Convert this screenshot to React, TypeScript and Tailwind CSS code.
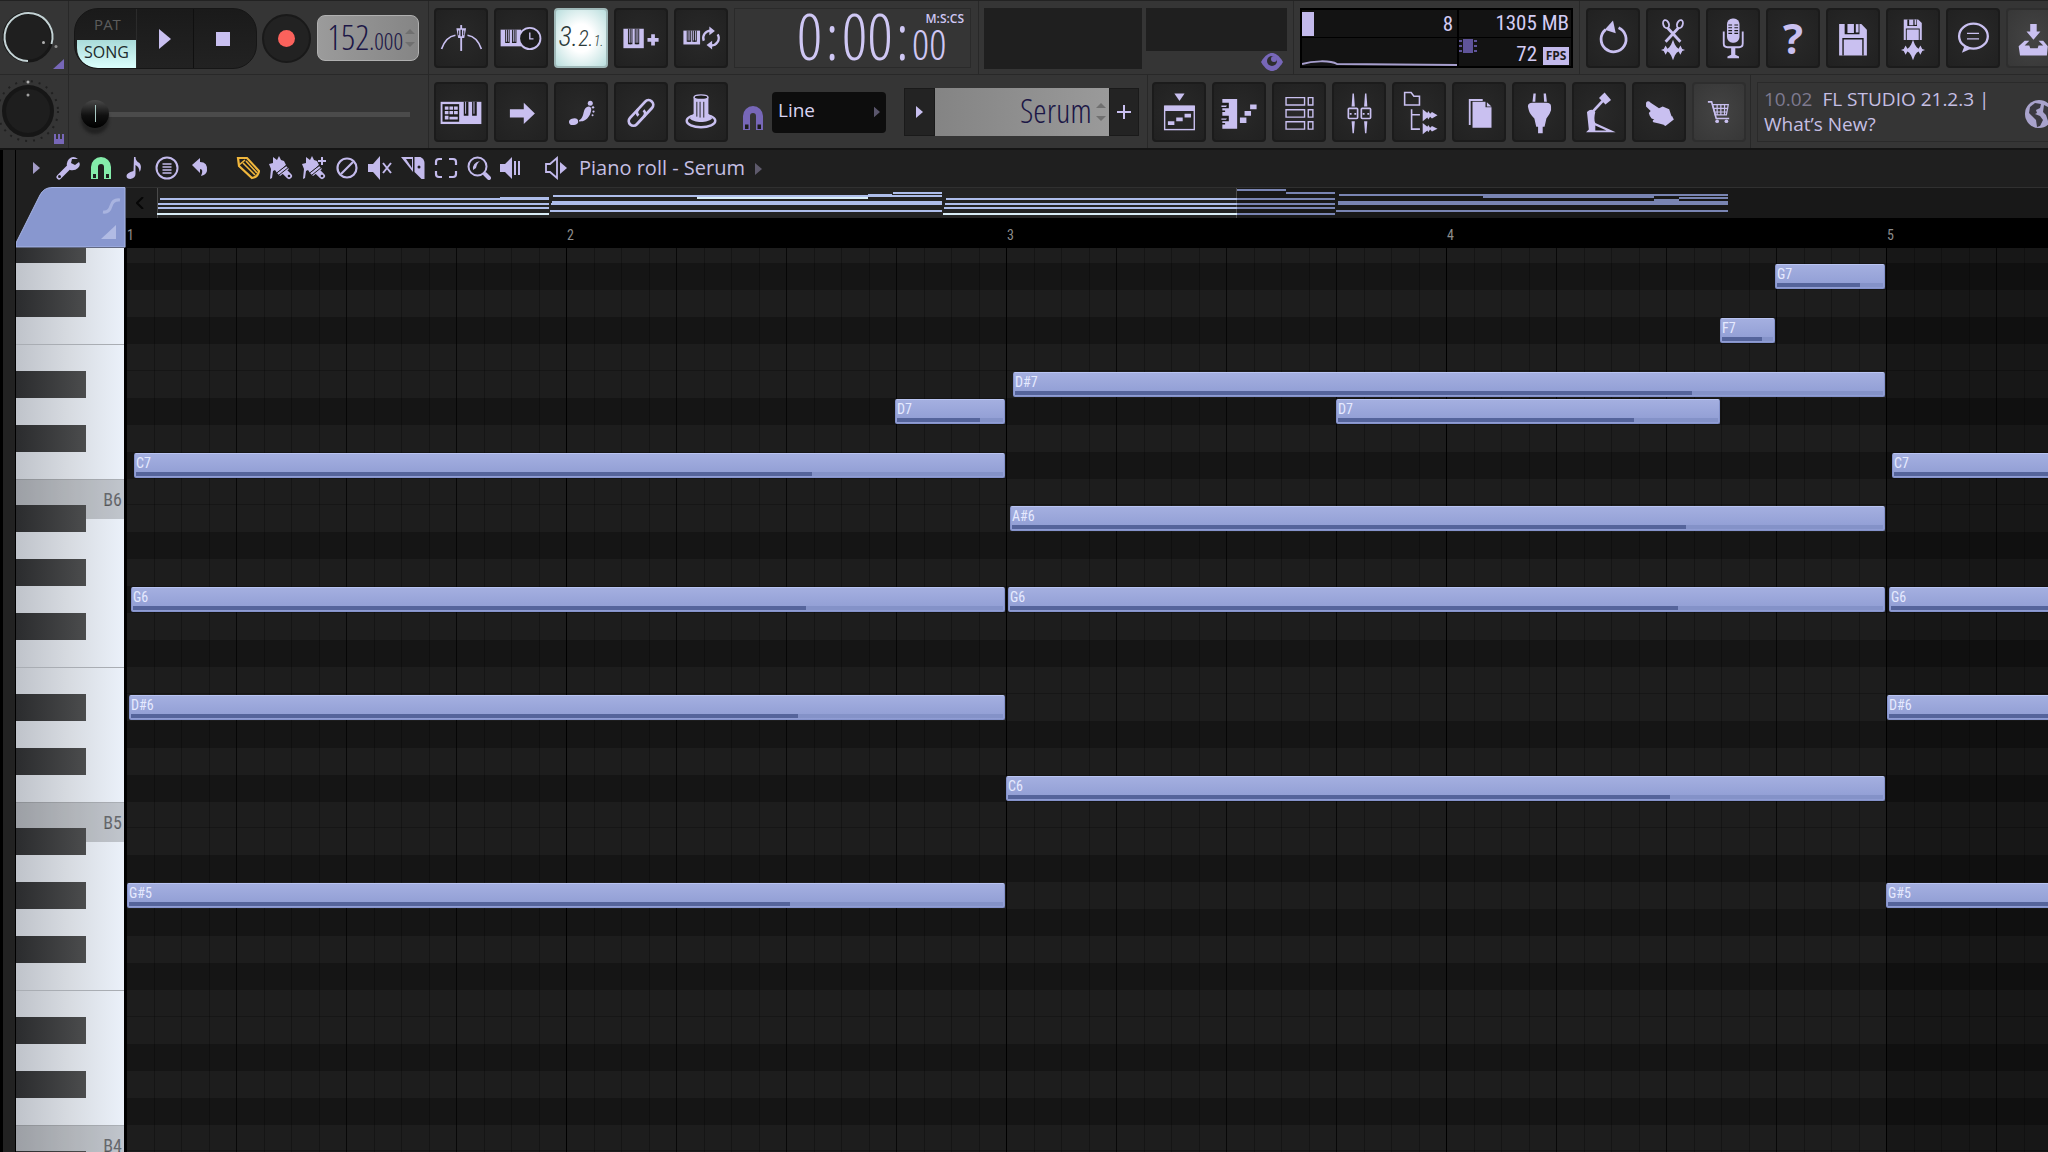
import React from 'react';
import clsx from 'clsx';

const TOP_PITCH = 92; // G#7
const ROW_COUNT = 36;
const BARS = [1, 2, 3, 4, 5];
const STEPS = Array.from({ length: 16 }, (_, i) => i);
const NAMES = ['C', 'C#', 'D', 'D#', 'E', 'F', 'F#', 'G', 'G#', 'A', 'A#', 'B'];
const BLACK = [1, 3, 6, 8, 10];
// rows shaded darker for the selected scale
const SHADED = [0, 2, 5, 7, 9];

const PITCHES = Array.from({ length: ROW_COUNT }, (_, i) => TOP_PITCH - i);

const noteName = (pitch: number) => `${NAMES[pitch % 12]}${Math.floor(pitch / 12)}`;

// B rows are one pixel shorter, so an octave is 323px
const rowTop = (pitch: number) =>
  PITCHES.filter((p) => p > pitch).reduce((y, p) => y + (p % 12 === 11 ? 26 : 27), 0);

interface Note {
  pitch: number;
  start: number;
  end: number;
  level: number;
}

const NOTES: Note[] = [
  { pitch: 91, start: 1649, end: 1759, level: 78 },
  { pitch: 89, start: 1594, end: 1649, level: 78 },
  { pitch: 87, start: 887, end: 1759, level: 78 },
  { pitch: 86, start: 769, end: 879, level: 78 },
  { pitch: 86, start: 1210, end: 1594, level: 78 },
  { pitch: 84, start: 8, end: 879, level: 78 },
  { pitch: 84, start: 1766, end: 2640, level: 78 },
  { pitch: 82, start: 884, end: 1759, level: 77.4 },
  { pitch: 79, start: 5, end: 879, level: 77.4 },
  { pitch: 79, start: 882, end: 1759, level: 76.5 },
  { pitch: 79, start: 1763, end: 2640, level: 77 },
  { pitch: 75, start: 3, end: 879, level: 76.5 },
  { pitch: 75, start: 1761, end: 2640, level: 76.5 },
  { pitch: 72, start: 880, end: 1759, level: 75.7 },
  { pitch: 68, start: 1, end: 879, level: 75.6 },
  { pitch: 68, start: 1760, end: 2640, level: 75.6 },
];

// x, y, width, height of each line in the overview strip
const OVERVIEW: number[][] = [
  [3, 10, 389, 2], [1, 15, 391, 2], [1, 19, 391, 2], [0, 25, 392, 2], [343, 9, 49, 3],
  [396, 7, 389, 2], [540, 9, 171, 2], [711, 6, 24, 3], [736, 4, 49, 2], [395, 13, 390, 2], [394, 15, 391, 2], [393, 22, 392, 2],
  [789, 10, 291, 2], [788, 15, 292, 2], [787, 19, 293, 2], [786, 25, 294, 2],
  [1080, 1, 49, 2], [1129, 4, 49, 2], [1080, 10, 98, 2], [1080, 15, 98, 2], [1080, 19, 98, 2], [1080, 25, 98, 2],
  [1182, 6, 389, 2], [1326, 8, 171, 2], [1497, 11, 25, 2], [1522, 9, 49, 2], [1181, 13, 390, 4], [1179, 22, 392, 2],
];

const DARK = '#1c1c1c';

function Svg({ children, className = 'h-[60px] w-[54px]', box = '0 0 54 60' }: { children: React.ReactNode; className?: string; box?: string }) {
  return (
    <svg viewBox={box} className={className} fill="currentColor" aria-hidden="true">
      {children}
    </svg>
  );
}

function ToolButton({ label, children, lit, light }: { label: string; children: React.ReactNode; lit?: boolean; light?: boolean }) {
  return (
    <button
      type="button"
      aria-label={label}
      className={clsx(
        'flex h-[60px] w-[54px] shrink-0 items-center justify-center rounded-sm border-2 text-[#c9c0f0]',
        lit && 'border-[#9fb8b8] bg-[radial-gradient(#ffffff_35%,#b9dedd)]',
        light && 'border-[#2e2e2e] bg-[radial-gradient(#444444,#373737)]',
        !lit && !light && 'border-[#1b1b1b] bg-[radial-gradient(#292929,#212121)]'
      )}
    >
      {children}
    </button>
  );
}

function Keys({ x, y, w, h }: { x: number; y: number; w: number; h: number }) {
  const k = w / 3;
  return (
    <g>
      <rect x={x} y={y} width={w} height={h} />
      {[1, 2].map((i) => (
        <path key={i} fill={DARK} d={`M${x + k * i - 2.4} ${y}h1v${h * 0.72}h2.8v-${h * 0.72}h1v${h * 0.8}h-4.8z`} />
      ))}
      {[1, 2].map((i) => (
        <rect key={i} x={x + k * i - 0.5} y={y} width="1" height={h * 0.8} fill={DARK} />
      ))}
    </g>
  );
}

function Wave({ y }: { y: number }) {
  return <path d={`M14 ${y}l3-1 2-4 2 3.500 2-1.500 2-3 2-5 2 5 2 3 2 1.500 2-3.500 2 4 3 1-3 1-2 4-2-3.500-2 1.500-2 3-2 5-2-5-2-3-2-1.500-2 3.500-2-4z`} />;
}

function Floppy({ x, y, s }: { x: number; y: number; s: number }) {
  return (
    <g transform={`translate(${x} ${y}) scale(${s})`}>
      <path d="M0 0h24l6 6v28H0z" />
      <path fill={DARK} d="M6 0h3v11H6zM9 9.500h7V11H9zM16 0h6v11h-6z" />
      <path d="M18 0h3v9h-3z" />
      <path fill={DARK} d="M3.500 15h23v19h-1.500V16.500H5V34H3.500z" />
    </g>
  );
}

function Magnet({ className }: { className: string }) {
  return (
    <Svg box="0 0 22 26" className={className}>
      <path d="M1 25V11a10 10 0 0 1 20 0v14h-7V11a3 3 0 0 0-6 0v14z" />
      <path fill={DARK} d="M3 19.500h3.500V24H3zM15.500 19.500H19V24h-3.500z" />
    </Svg>
  );
}

function Steppers() {
  return (
    <span className="flex flex-col gap-2 text-[#707070]">
      <Svg box="0 0 10 5" className="h-[5px] w-[10px]"><path d="M0 5L5 0l5 5z" /></Svg>
      <Svg box="0 0 10 5" className="h-[5px] w-[10px]"><path d="M0 0l5 5 5-5z" /></Svg>
    </span>
  );
}

function Arrow({ className }: { className: string }) {
  return <Svg box="0 0 7 12" className={className}><path d="M0 0l7 6-7 6z" /></Svg>;
}

function Transport() {
  return (
    <div className="flex h-[61px] w-[183px] overflow-hidden rounded-[24px] border border-[#161616] bg-linear-to-b from-[#1a1a1a] to-[#222222]">
      <div className="flex w-[62px] flex-col border-r border-[#2b2b2b] font-['Open_Sans']">
        <button type="button" className="h-8 w-full pl-1 text-[15px] text-[#5c5c5c]">PAT</button>
        <button type="button" className="ml-0.5 h-7 rounded-bl-[20px] bg-linear-to-b from-[#a9dbd9] to-[#dcfffd] pb-1 text-base leading-6 text-[#1c2b2b]">SONG</button>
      </div>
      <button type="button" aria-label="Play" className="flex w-[57px] items-center justify-center border-r border-[#101010] text-[#c9c0f0]">
        <Svg box="0 0 12 20" className="h-5 w-3"><path d="M0 0l12 10L0 20z" /></Svg>
      </button>
      <button type="button" aria-label="Stop" className="flex flex-1 items-center pl-[22px]">
        <span className="size-3.5 bg-[#c9c0f0]" />
      </button>
    </div>
  );
}

function Knob({ label, ring, children }: { label: string; ring?: boolean; children: React.ReactNode }) {
  return (
    <div className="w-[69px] shrink-0 overflow-hidden border-r border-[#282828] text-[#7767b8]">
      <svg viewBox="0 0 68 73" className="h-[73px] w-[68px]" role="img" aria-label={label}>
        {ring ? (
          <>
            <circle cx="28" cy="36" r="24" fill="#1f1f1f" stroke="#171717" strokeWidth="3" />
            <path d="M28 60A24 24 0 1 1 51.500 43" fill="none" stroke="#c3d2d4" strokeWidth="2" />
            <circle cx="43.500" cy="41.500" r="1.500" fill="#b0b0b0" />
            <circle cx="56" cy="45.500" r="1.500" fill="#909090" />
          </>
        ) : (
          <>
            <circle cx="28" cy="36" r="30" fill="none" stroke="#202020" strokeWidth="2" strokeDasharray="2 6" />
            <circle cx="28" cy="36" r="24" fill="#1e1e1e" stroke="#161616" strokeWidth="4" />
            <circle cx="28" cy="7" r="1.500" fill="#b0b0b0" />
            <circle cx="28" cy="20" r="1.500" fill="#a0a0a0" />
          </>
        )}
        {children}
      </svg>
    </div>
  );
}

function Monitor() {
  return (
    <div className="flex h-[60px] w-[273px] border-2 border-black bg-black font-['Roboto_Condensed'] text-[21px] leading-6 text-[#d3ccf4]">
      <div className="flex w-[155px] flex-col bg-[#131313]">
        <div className="flex h-[28px] items-center justify-between border-b border-black pr-1">
          <span className="h-6 w-3 bg-[#c3baec]" />
          <span>8</span>
        </div>
        <svg viewBox="0 0 155 28" className="h-7 w-[155px]" fill="none" stroke="#a79fce" strokeWidth="2" aria-hidden="true">
          <path d="M0 26C10 23 28 22 35 26L155 27" />
        </svg>
      </div>
      <div className="ml-0.5 flex-1 bg-[#131313]">
        <div className="flex h-[28px] items-center justify-end border-b border-black pr-0.5 pb-0.5">1305 MB</div>
        <div className="flex h-7 items-center justify-end gap-1.5 pt-1 pr-0.5">
          <Svg box="0 0 18 14" className="mr-auto mb-4 h-3.5 w-[18px] text-[#5f5499]">
            <path d="M4 0h10v14H4zM0 1h3v2H0zM0 6h3v2H0zM0 11h3v2H0zM15 1h3v2h-3zM15 6h3v2h-3zM15 11h3v2h-3z" />
          </Svg>
          <span>72</span>
          <span className="mt-1 h-[18px] w-[26px] bg-[#c3baec] text-center font-['Open_Sans'] text-xs leading-[18px] font-bold text-[#1c1c1c]">FPS</span>
        </div>
      </div>
    </div>
  );
}

function TopRow() {
  return (
    <div className="flex h-[74px] border-b border-[#282828]">
      <Knob label="Main volume" ring>
        <path fill="currentColor" d="M64 58v10H53z" />
      </Knob>
      <div className="flex w-[360px] shrink-0 items-start border-r border-[#282828] pt-[7px] pl-[5px]">
        <Transport />
        <button type="button" aria-label="Record" className="mt-1.5 ml-[5px] flex size-[49px] items-center justify-center rounded-full border-2 border-[#191919] bg-[#222222]">
          <span className="size-[17px] rounded-full bg-[#fb625c]" />
        </button>
        <div className="mt-[7px] ml-1.5 flex h-[46px] w-[102px] items-center justify-end gap-0.5 rounded-lg border border-[#b0b0b0] bg-linear-to-r from-[#9b9b9b] to-[#858585] pr-[3px] font-['Open_Sans_Condensed_Light'] text-[#1c1746]">
          <span className="pb-0.5 text-[35px] leading-[38px]">152<span className="text-2xl">.000</span></span>
          <Steppers />
        </div>
      </div>
      <div className="flex w-[550px] shrink-0 items-start gap-1.5 border-r border-[#282828] pt-[7px] pl-[5px]">
        <ToolButton label="Metronome">
          <Svg>
            <path d="M22 19.500h10.500l-2 10.500h-6.500z" />
            <path d="M27.200 16v28" stroke="currentColor" strokeWidth="2" />
            <path fill={DARK} d="M26.500 21h1.500v7h-1.500zM24 22h1v5h-1zM29.500 22h1v5h-1z" />
            <path d="M6 42c3-9 8-14 15-15M49 42c-3-9-8-14-15-15" fill="none" stroke="currentColor" strokeWidth="1.800" />
          </Svg>
        </ToolButton>
        <ToolButton label="Wait for input">
          <Svg>
            <Keys x={5} y={21} w={22} h={18} />
            <circle cx="36.500" cy="30.500" r="11.500" fill={DARK} stroke="currentColor" strokeWidth="2" />
            <path d="M36.500 24v7h4" fill="none" stroke="currentColor" strokeWidth="1.500" />
          </Svg>
        </ToolButton>
        <ToolButton label="Countdown" lit>
          <span className="font-['Roboto_Condensed'] text-[28px] leading-8 font-light text-[#2c3a3a] italic">
            3.<span className="text-[22px]">2.</span><span className="text-sm">1.</span>
          </span>
        </ToolButton>
        <ToolButton label="Step edit">
          <Svg>
            <Keys x={8} y={20} w={22} h={21} />
            <path d="M38 26h4v4h4v4h-4v4h-4v-4h-4v-4h4z" />
          </Svg>
        </ToolButton>
        <ToolButton label="Loop record">
          <Svg>
            <Keys x={8} y={22} w={18} h={15} />
            <path d="M30 33a8 8 0 0 1 8-11M45 26a8 8 0 0 1-8 12" fill="none" stroke="currentColor" strokeWidth="2.500" />
            <path d="M36 17.500l6 5-6 4.500zM39 42.500l-6-5 6-4.500z" />
          </Svg>
        </ToolButton>
        <div className="flex h-[60px] w-[237px] justify-end border border-[#2a2a2a] font-['Open_Sans_Condensed_Light'] text-[#cfc7f4]">
          <div className="flex items-baseline text-[64px] leading-[54px]">
            <span>0</span>
            <span className="px-[3px]">:</span>
            <span>00</span>
            <span className="px-[3px]">:</span>
          </div>
          <div className="flex w-[58px] flex-col items-end pt-1 pr-1.5">
            <span className="font-['Open_Sans'] text-xs leading-3 font-semibold">M:S:CS</span>
            <span className="mr-auto text-[43px] leading-[38px]">00</span>
          </div>
        </div>
      </div>
      <div className="flex w-[315px] shrink-0 items-start gap-1 border-r border-[#282828] pt-[7px] pl-[5px]">
        <div className="h-[61px] w-[158px] bg-[#1f1f1f]" />
        <div className="flex w-[141px] flex-col items-end">
          <div className="h-[43px] w-full bg-[#1f1f1f]" />
          <Svg box="0 0 22 18" className="mt-0.5 mr-1 h-[18px] w-[22px] text-[#7767b8]">
            <path d="M0 9C4 2 8 0 11 0s7 2 11 9c-4 7-8 9-11 9S4 16 0 9z" />
            <circle cx="11" cy="8" r="5" fill="#2e2e2e" />
            <circle cx="13" cy="6" r="3" />
          </Svg>
        </div>
      </div>
      <div className="w-[286px] shrink-0 border-r border-[#282828] pt-[7px] pl-1.5">
        <Monitor />
      </div>
      <div className="flex min-w-0 flex-1 gap-1.5 overflow-hidden pt-[7px] pl-1.5">
        <ToolButton label="Undo">
          <Svg>
            <path d="M19 21a13.500 13.500 0 1 0 14-2" fill="none" stroke="currentColor" strokeWidth="3" />
            <path d="M27 11l3 14-12-4z" />
          </Svg>
        </ToolButton>
        <ToolButton label="Cut tool">
          <Svg>
            <g fill="none" stroke="currentColor">
              <path d="M21 19l14 15M33 19L19 34" strokeWidth="3" />
              <ellipse cx="19.500" cy="15" rx="3" ry="4.500" strokeWidth="2" transform="rotate(-20 19.500 15)" />
              <ellipse cx="34.500" cy="15" rx="3" ry="4.500" strokeWidth="2" transform="rotate(20 34.500 15)" />
            </g>
            <Wave y={43} />
          </Svg>
        </ToolButton>
        <ToolButton label="Record audio">
          <Svg>
            <rect x="20.500" y="9" width="13.500" height="26" rx="6" />
            <path stroke={DARK} strokeWidth="1.200" d="M22 16h4M28.500 16h4M22 19h4M28.500 19h4M22 22h4M28.500 22h4M22 25h4M28.500 25h4" />
            <path d="M17 23v13q0 4 4 4h12.500q4 0 4-4V23" fill="none" stroke="currentColor" strokeWidth="2" />
            <path d="M25 40h4.500v8l4 2v2H21v-2l4-2z" />
          </Svg>
        </ToolButton>
        <ToolButton label="Help">
          <span className="font-['Open_Sans'] text-[42px] leading-[56px] font-bold">?</span>
        </ToolButton>
        <ToolButton label="Save">
          <Svg><Floppy x={12} y={15} s={1} /></Svg>
        </ToolButton>
        <ToolButton label="Render audio">
          <Svg>
            <Floppy x={17} y={10} s={0.65} />
            <Wave y={43} />
          </Svg>
        </ToolButton>
        <ToolButton label="Feedback">
          <Svg>
            <ellipse cx="27.500" cy="28" rx="15.500" ry="13.500" fill="none" stroke="currentColor" strokeWidth="2.500" />
            <path d="M18 38l-3 8 11-5z" />
            <path d="M20.500 25h13M20.500 31h13" stroke="currentColor" strokeWidth="1.500" />
          </Svg>
        </ToolButton>
        <ToolButton label="Download" light>
          <Svg>
            <path d="M24 15h7v8h4l-7.500 9L20 23h4z" />
            <path d="M18 33h5l-5 5h5l1 3h8l1-3h5l-5-5h5l5 6-1 10H13l-1.500-10z" />
          </Svg>
        </ToolButton>
      </div>
    </div>
  );
}

function SecondRow() {
  return (
    <div className="flex h-[73px]">
      <Knob label="Main pitch">
        <path fill="currentColor" d="M54 59h2v5h2v-5h2v5h2v-5h2v10H54z" />
      </Knob>
      <div className="w-[360px] shrink-0 border-r border-[#282828] pt-[25px] pl-3">
        <input
          type="range"
          aria-label="Song position"
          min={0}
          max={100}
          defaultValue={0}
          className="h-7 w-[329px] appearance-none bg-transparent [&::-webkit-slider-runnable-track]:h-[5px] [&::-webkit-slider-runnable-track]:bg-[#4b4b4b] [&::-webkit-slider-thumb]:-mt-3 [&::-webkit-slider-thumb]:size-7 [&::-webkit-slider-thumb]:appearance-none [&::-webkit-slider-thumb]:rounded-full [&::-webkit-slider-thumb]:shadow-[0_6px_3px_#222] [&::-webkit-slider-thumb]:[background:linear-gradient(#a9c9c4,#a9c9c4)_center/1px_17px_no-repeat,linear-gradient(#4a4a4a,#101010_55%,#000)]"
        />
      </div>
      <div className="flex w-[719px] shrink-0 items-start gap-1.5 border-r border-[#282828] pt-[7px] pl-[5px]">
        <ToolButton label="Typing keyboard">
          <Svg>
            <rect x="5" y="19" width="44" height="24" />
            <rect x="7" y="21.500" width="18" height="19" fill={DARK} />
            <path d="M9.500 24h4v3.500h-4zM14.500 24h4v3.500h-4zM19.500 24h4v3.500h-4zM9.500 29h4v3.500h-4zM14.500 29h4v3.500h-4zM19.500 29h4v3.500h-4zM9.500 34h4v4h-4zM14.500 35h9v3h-9z" />
            <path fill={DARK} d="M30 19h5v15h-5zM39 19h5v15h-5z" />
            <path d="M31.500 19h1v13h-1zM40.500 19h1v13h-1z" />
          </Svg>
        </ToolButton>
        <ToolButton label="Step forward">
          <Svg><path d="M15 27h15v-7l12 11.500L30 43v-7H15z" /></Svg>
        </ToolButton>
        <ToolButton label="Slide notes">
          <Svg>
            <ellipse cx="19" cy="40.500" rx="5" ry="3.500" transform="rotate(-10 19 40.500)" />
            <path d="M25 39c5-3 4-8 6-12 3-5 8-3 7 1-1 7-6 12-11 12q-3 1-2-1z" />
            <circle cx="37" cy="20.500" r="2.700" />
            <circle cx="40" cy="25" r="1.300" />
            <circle cx="40.500" cy="29.500" r="1.200" />
            <circle cx="39.500" cy="33.500" r="1.100" />
          </Svg>
        </ToolButton>
        <ToolButton label="Link controllers">
          <Svg>
            <g fill="none" stroke="currentColor" strokeWidth="3" transform="rotate(-47 27 31)">
              <path d="M28 26H15a5 5 0 0 0 0 10h11a5 5 0 0 0 5-5" />
              <path d="M26 36h13a5 5 0 0 0 0-10H28a5 5 0 0 0-5 5" />
            </g>
          </Svg>
        </ToolButton>
        <ToolButton label="Knob control">
          <Svg>
            <ellipse cx="27" cy="39.500" rx="15.500" ry="7" fill="none" stroke="currentColor" strokeWidth="2.500" />
            <path d="M19 14h16v18l4 5c-4 5-20 5-24 0l4-5z" />
            <ellipse cx="27" cy="14" rx="7.500" ry="2.500" fill={DARK} stroke="currentColor" strokeWidth="1.500" />
            <path stroke={DARK} d="M22.500 19v16M26 19v17M30 19v17" />
          </Svg>
        </ToolButton>
        <Magnet className="mt-[23px] ml-2 h-[26px] w-[22px] shrink-0 text-[#7767b8]" />
        <div className="relative mt-2.5 ml-0.5 w-[114px]">
          <select aria-label="Snap" className="h-[41px] w-full appearance-none rounded-sm bg-[#0d0d0d] pl-1.5 pb-1 font-['Open_Sans'] text-[19px] text-[#d9d4f2]">
            <option>Line</option>
          </select>
          <Arrow className="absolute top-3.5 right-1.5 h-3 w-1.5 text-[#5a566c]" />
        </div>
        <div className="mt-1.5 ml-3 flex h-12 w-[235px]">
          <button type="button" aria-label="Channel menu" className="flex w-[31px] items-center justify-center border border-[#1a1a1a] bg-[#232323] text-[#c9c0f0]">
            <Arrow className="h-3 w-[7px]" />
          </button>
          <div className="flex flex-1 items-center justify-end gap-1 bg-linear-to-r from-[#848484] to-[#9a9a9a] pr-[3px] font-['Open_Sans_Condensed_Light'] text-[#1c1746]">
            <span className="pb-1 text-[34px] leading-10">Serum</span>
            <Steppers />
          </div>
          <button type="button" aria-label="Add pattern" className="flex w-[30px] items-center justify-center border border-[#1a1a1a] bg-[#232323] text-[#c9c0f0]">
            <Svg box="0 0 14 14" className="size-3.5"><path d="M6 0h2v6h6v2H8v6H6V8H0V6h6z" /></Svg>
          </button>
        </div>
      </div>
      <div className="flex w-[603px] shrink-0 gap-1.5 border-r border-[#282828] pt-[7px] pl-1">
        <ToolButton label="Playlist">
          <Svg>
            <path d="M22 10h11l-5.500 8z" />
            <rect x="11.500" y="24" width="32" height="25" fill="none" stroke="currentColor" strokeWidth="1.500" />
            <path d="M11 23h33v6H11zM15 40h7v4h-7zM24 36h7v4h-7zM33 32h7v4h-7z" />
          </Svg>
        </ToolButton>
        <ToolButton label="Piano roll">
          <Svg>
            <path d="M9 16h16v32H9zM28 36h7v6h-7zM33 29h7v5h-7zM39 22h7v5h-7z" />
            <path fill={DARK} d="M8 20h8v6H8zM8 28.500h4v1.500H8zM8 34h8v6H8zM8 42h4v1.500H8z" />
            <path d="M8 23h6l-1 1.500H8zM8 37h6l-1 1.500H8z" />
          </Svg>
        </ToolButton>
        <ToolButton label="Channel rack">
          <Svg>
            <path fill="none" stroke="currentColor" strokeWidth="1.500" d="M13 14.500h20v8H13zM37 14.500h5v8h-5zM13 27.500h20v8H13zM37 27.500h5v8h-5zM13 40.500h20v8H13zM37 40.500h5v8h-5z" />
          </Svg>
        </ToolButton>
        <ToolButton label="Mixer">
          <Svg>
            <path d="M20 10h1.500l1 14h-3.500zM33.500 10h1.500l1 14h-3.500zM19 40h3.500l-1 13h-1.500zM32.500 40h3.500l-1 13h-1.500z" />
            <rect x="15.500" y="26" width="10" height="11" rx="1" fill="none" stroke="currentColor" strokeWidth="1.800" />
            <rect x="29.500" y="26" width="10" height="11" rx="1" fill="none" stroke="currentColor" strokeWidth="1.800" />
            <path d="M17 31h2v2h-2zM22 31h2v2h-2zM31 31h2v2h-2zM36 31h2v2h-2z" />
          </Svg>
        </ToolButton>
        <ToolButton label="Browser">
          <Svg>
            <path d="M11.500 9h7l3 4h6v9.500h-16zM19 27v21.500h9M19 33h9" fill="none" stroke="currentColor" strokeWidth="1.700" />
            <path d="M31 27l5 4 1-2 2 3 2-2 6 3.500-6 3.500-2-2-2 3-1-2-5 4zM31 42l5 4 1-2 2 3 2-2 6 3-6 3-2-2-2 3-1-2-5 4z" />
          </Svg>
        </ToolButton>
        <ToolButton label="Project info">
          <Svg>
            <path d="M31 16H16v28h2V18h13z" />
            <path d="M20 19h14v6h6.500v22H20z" />
            <path d="M35.500 19.500l5 4.500h-5z" />
          </Svg>
        </ToolButton>
        <ToolButton label="Plugin database">
          <Svg>
            <path d="M21 10h2.500l-.5 9h-3zM32 10h2.500l1 9h-3zM15 24q0-4 5-4h15q5 0 5 4v4q-1 4-5 9l-2 9h-2v7h-5v-7h-2l-2-9q-5-5-6-9z" />
          </Svg>
        </ToolButton>
        <ToolButton label="Remote">
          <Svg>
            <path d="M27 15l6-6 7 8-6 5z" />
            <path d="M31 18L19 31" stroke="currentColor" strokeWidth="3" />
            <path d="M14 30q5-5 9 0-2 8 0 12l22 10H13l3-3q-1-10-2-19z" />
            <path fill={DARK} d="M23 44.500l12 5.500H23z" />
          </Svg>
        </ToolButton>
        <ToolButton label="Touch">
          <Svg>
            <path d="M13 20q2-3 5 0l9 6 4-2 7 3q2 6 3 9l-8 8q-6-2-12-3-2-2 1-3l-3-1-2-3-1-3 2-2-5-5z" />
            <path d="M41 34l2 4-9 7-2-1z" />
          </Svg>
        </ToolButton>
        <ToolButton label="Shop" light>
          <Svg>
            <path d="M15 19h4l5 18h14" fill="none" stroke="currentColor" strokeWidth="1.800" />
            <path fill="none" stroke="currentColor" strokeWidth="1.300" d="M20 22h17l-2 11H23zM21 26h16M22 30h14M25 22v11M29 22v11M33 22v11" />
            <circle cx="25" cy="40" r="2" />
            <circle cx="35" cy="40" r="2" />
          </Svg>
        </ToolButton>
      </div>
      <div className="min-w-0 flex-1 pt-[7px] pl-1.5">
        <div className="relative h-[60px] overflow-hidden border border-r-0 border-[#2a2a2a] pt-1 pl-1.5 font-['Open_Sans'] text-[19px] leading-[25px] whitespace-nowrap text-[#c5bfe4]">
          <div><span className="mr-2.5 text-[#7e7a90]">10.02</span>FL STUDIO 21.2.3 |</div>
          <div>What’s New?</div>
          <Svg box="0 0 30 30" className="absolute top-4 -right-1.5 size-[30px] text-[#a9a3cc]">
            <circle cx="15" cy="15" r="14" />
            <path fill="#3a3940" d="M6 8l5-4 6 1-1 4-4 2 1 3-2 1 5 2 3 4-3 6-3 1-1-7-4-4-3-3z" />
            <path fill="#3a3940" d="M20 6l4 2 4 6-1 6-3 2-2-6-3-3z" />
          </Svg>
        </div>
      </div>
    </div>
  );
}

function RollTool({ label, children, className = 'text-[#c3baec]' }: { label: string; children: React.ReactNode; className?: string }) {
  return (
    <button type="button" aria-label={label} className={clsx('flex h-full w-[33px] shrink-0 items-center justify-center', className)}>
      <svg viewBox="0 0 24 24" className="size-6" fill="currentColor" aria-hidden="true">{children}</svg>
    </button>
  );
}

function Brush() {
  return (
    <>
      <path d="M4 1l4 3 2-4 2 4 3 1 2 4-9 8-2-3-2 1-1 7-2 1 1-10-2-5 4-1z" />
      <path d="M17 10l3 3-9 7-3-3z" />
      <path d="M15 15l5 5" stroke="currentColor" strokeWidth="6" strokeLinecap="round" />
      <path d="M7 17.500L18 9M10 19l10-8" stroke="#1f1f1f" />
      <circle cx="20" cy="20" r="1.300" fill="#1f1f1f" />
    </>
  );
}

function RollToolbar() {
  return (
    <div className="flex h-[37px] shrink-0 items-center bg-[#1f1f1f] pb-0.5 pl-0.5">
      <button type="button" aria-label="Piano roll menu" className="flex h-full w-[33px] items-center justify-center pl-1 text-[#a39cc6]">
        <Arrow className="h-3 w-[7px]" />
      </button>
      <RollTool label="Tools">
        <path d="M3 21l9-9" stroke="currentColor" strokeWidth="5" strokeLinecap="round" />
        <path d="M22 3q-5-4-9 0-3 3-2 7l3 4q5 1 8-2 3-3 1-6l-4 3-4-2 1-4z" />
        <circle cx="3.500" cy="20.500" r="1.500" fill="#1f1f1f" />
      </RollTool>
      <RollTool label="Snap" className="text-[#84ecaa]">
        <path d="M2 23V11a10 10 0 0 1 20 0v12h-7V11a3 3 0 0 0-6 0v12z" />
        <path fill="#1f1f1f" d="M4 18h3v4H4zM17 18h3v4h-3z" />
      </RollTool>
      <RollTool label="Stamp">
        <path d="M12 1h1.500q0 4 4 6 3 4 0 9 0-5-4-7v9q0 4-5 5-4 0-4-3t7-5z" />
      </RollTool>
      <RollTool label="View options">
        <circle cx="12" cy="12" r="10.500" fill="none" stroke="currentColor" strokeWidth="2" />
        <path d="M7.500 8h9M7.500 11h9M7.500 14h9M7.500 17h9" stroke="currentColor" strokeWidth="1.300" />
      </RollTool>
      <RollTool label="Undo">
        <path d="M4 9l8-7v4q8 0 7 9-1 4-6 5 3-7-1-7v4z" />
      </RollTool>
      <div className="ml-[15px] flex h-full">
        <RollTool label="Draw" className="text-[#f0b63c]">
          <path d="M2 2h9l12 13q-1 6-7 7L3 10z" fill="none" stroke="currentColor" strokeWidth="2.200" />
          <path d="M3 9l6-5M7 7l12 12M10 5l11 12" fill="none" stroke="currentColor" strokeWidth="1.600" />
        </RollTool>
        <RollTool label="Paint"><Brush /></RollTool>
        <RollTool label="Paint drum sequences">
          <Brush />
          <path d="M19 1h2v3h3v2h-3v3h-2V6h-3V4h3z" />
        </RollTool>
        <RollTool label="Delete">
          <circle cx="12" cy="12" r="9.500" fill="none" stroke="currentColor" strokeWidth="2.200" />
          <path d="M6 18L18 6" stroke="currentColor" strokeWidth="2.200" />
        </RollTool>
        <RollTool label="Mute">
          <path d="M0 8h5l7-8v24l-7-8H0z" />
          <path d="M15 7l8 10M23 7l-8 10" stroke="currentColor" strokeWidth="2" />
        </RollTool>
        <RollTool label="Slice">
          <path d="M0 1h12v15z" />
          <path d="M13.500 1h6q4 2 4 6v16h-3l-7-7z" />
          <path d="M5 3l6 9V3z" fill="#1f1f1f" />
          <circle cx="18" cy="11" r="1.500" fill="#1f1f1f" />
        </RollTool>
        <RollTool label="Select">
          <path d="M2 9V6q0-3 3-3h3M15 3h4q3 0 3 3v3M22 15v3q0 3-3 3h-4M8 21H5q-3 0-3-3v-3" fill="none" stroke="currentColor" strokeWidth="2.200" />
        </RollTool>
        <RollTool label="Zoom">
          <circle cx="10.500" cy="10.500" r="9" fill="none" stroke="currentColor" strokeWidth="2" />
          <path d="M6 14q-1-7 7-9-3 2-4 7z" />
          <path d="M18 18l4 4" stroke="currentColor" strokeWidth="4" strokeLinecap="round" />
        </RollTool>
        <RollTool label="Playback">
          <path d="M0 8h5l7-7v22l-7-7H0zM14 5h2v14h-2zM18 5h2v14h-2z" />
        </RollTool>
      </div>
      <h1 className="ml-3 flex items-center font-['Open_Sans'] text-xl leading-6 text-[#c5bfe4]">
        <RollTool label="Channel">
          <path d="M1 8h4l7-6v20l-7-6H1z" fill="none" stroke="currentColor" strokeWidth="1.800" />
          <path d="M15 6l7 6-7 6z" />
        </RollTool>
        <span className="mx-1.5">Piano roll - Serum</span>
        <Arrow className="mt-0.5 ml-1 h-3 w-[7px] text-[#5e5a6c]" />
      </h1>
    </div>
  );
}

function Overview() {
  return (
    <div className="flex h-[31px] items-stretch overflow-hidden border-t border-[#303030] bg-[#181818]">
      <button type="button" aria-label="Scroll left" className="flex w-[31px] shrink-0 items-center justify-center bg-[#1d1d1d] pr-1 text-[#060606]">
        <Svg box="0 0 8 12" className="h-3 w-2"><path d="M7 0L1 6l6 6" fill="none" stroke="currentColor" strokeWidth="2" /></Svg>
      </button>
      <div className="relative flex-1">
        <div className="h-full w-[1080px] border-x border-[#4a4a4a] bg-[#232323]" />
        <svg className="absolute inset-0 h-full w-full" aria-hidden="true">
          {OVERVIEW.map(([x, y, w, h], i) => (
            <rect key={i} x={x} y={y} width={w} height={h} fill={x >= 1080 ? '#7984b2' : y === 25 || x === 540 ? '#d8ecf6' : '#aebdea'} />
          ))}
        </svg>
      </div>
    </div>
  );
}

function Ruler() {
  return (
    <div className="flex h-[30px] overflow-hidden bg-black">
      {BARS.map((bar) => (
        <span key={bar} className="w-[440px] shrink-0 pt-[5px] pl-px font-['Roboto_Condensed'] text-sm leading-6 text-[#8d8d8d]">{bar}</span>
      ))}
    </div>
  );
}

function Corner() {
  return (
    <svg viewBox="0 0 110 61" className="h-[61px] w-[110px] shrink-0 bg-[#1f1f1f]" aria-hidden="true">
      <path d="M0 60V56L24 8Q28 .5 36 .5H109V60z" fill="#8897cf" stroke="#a6b4e6" />
      <path d="M87 25q6 1 8-6t9-6" fill="none" stroke="#a9b4e0" strokeWidth="3" />
      <path d="M100 38v14H85z" fill="#b1bbe4" />
    </svg>
  );
}

function Keyboard() {
  return (
    <div className="w-[110px] shrink-0 overflow-hidden border-r-2 border-black bg-linear-to-r from-[#bfc3ca] via-[#d7dbe1] to-[#ebf1fa]">
      <div className="-mt-3">
        {PITCHES.map((pitch) => {
          const tone = pitch % 12;
          return (
            <div
              key={pitch}
              className={clsx('flex', tone === 11 ? 'h-[26px] border-t border-black/10 bg-black/18' : 'h-[27px]', tone === 4 && 'border-t border-[#a9adb3]')}
            >
              {BLACK.includes(tone) && <div className="w-[70px] bg-linear-to-r from-[#2b2c2e] to-[#4b4c4d]" />}
              {tone === 10 && <div className="h-3.5 flex-1 bg-black/18" />}
              {tone === 11 && (
                <span className="ml-auto pt-1.5 pr-0.5 font-['Roboto_Condensed'] text-lg leading-[27px] text-[#66686c]">{noteName(pitch)}</span>
              )}
            </div>
          );
        })}
      </div>
    </div>
  );
}

function NoteBlock({ note }: { note: Note }) {
  return (
    <div
      className="absolute flex h-[25px] flex-col justify-between rounded-xs border border-[#8492cb] border-t-[#b9c4f2] bg-linear-to-b from-[#a4afe0] to-[#8f9cd3] px-px pb-px"
      style={{ left: note.start, width: note.end - note.start, top: rowTop(note.pitch) + 1 }}
    >
      <span className="font-['Roboto_Condensed'] text-sm leading-[18px] text-[#e6eaff]">{noteName(note.pitch)}</span>
      <div className="h-1 shrink-0 bg-[#8492c8]">
        <div className="h-full bg-[#55649b]" style={{ width: `${note.level}%` }} />
      </div>
    </div>
  );
}

function NoteGrid() {
  return (
    <div className="min-w-0 flex-1 overflow-hidden">
      <div className="relative -mt-3">
        {PITCHES.map((pitch) => {
          const tone = pitch % 12;
          return (
            <div
              key={pitch}
              className={clsx(
                tone === 11 ? 'h-[26px]' : 'h-[27px]',
                SHADED.includes(tone) ? 'bg-[#151515]' : 'bg-[#1d1d1d]',
                (tone === 4 || tone === 11) && 'border-b border-[#161616]'
              )}
            />
          );
        })}
        <div className="absolute inset-0 flex overflow-hidden">
          {BARS.map((bar) => (
            <div key={bar} className={clsx('grid w-[440px] shrink-0 grid-cols-16', bar > 4 && 'bg-black/20')}>
              {STEPS.map((step) => (
                <div
                  key={step}
                  className={clsx('border-l', step === 0 && 'border-black', step > 0 && step % 4 === 0 && 'border-black/70', step % 4 !== 0 && 'border-black/25')}
                />
              ))}
            </div>
          ))}
        </div>
        {NOTES.map((note) => (
          <NoteBlock key={`${note.pitch}-${note.start}`} note={note} />
        ))}
      </div>
    </div>
  );
}

export default function App() {
  return (
    <div className="flex h-screen flex-col overflow-hidden bg-[#1f1f1f]">
      <header className="shrink-0 border-t border-b-2 border-t-[#222222] border-b-[#141414] bg-[#353535]">
        <TopRow />
        <SecondRow />
      </header>

      <main className="flex min-h-0 flex-1">
        <div className="w-4 shrink-0 border-r border-l-3 border-black bg-[#222222]" />
        <div className="flex min-w-0 flex-1 flex-col">
          <RollToolbar />
          <div className="flex shrink-0">
            <Corner />
            <div className="min-w-0 flex-1">
              <Overview />
              <Ruler />
            </div>
          </div>
          <div className="flex min-h-0 flex-1">
            <Keyboard />
            <NoteGrid />
          </div>
        </div>
      </main>
    </div>
  );
}
